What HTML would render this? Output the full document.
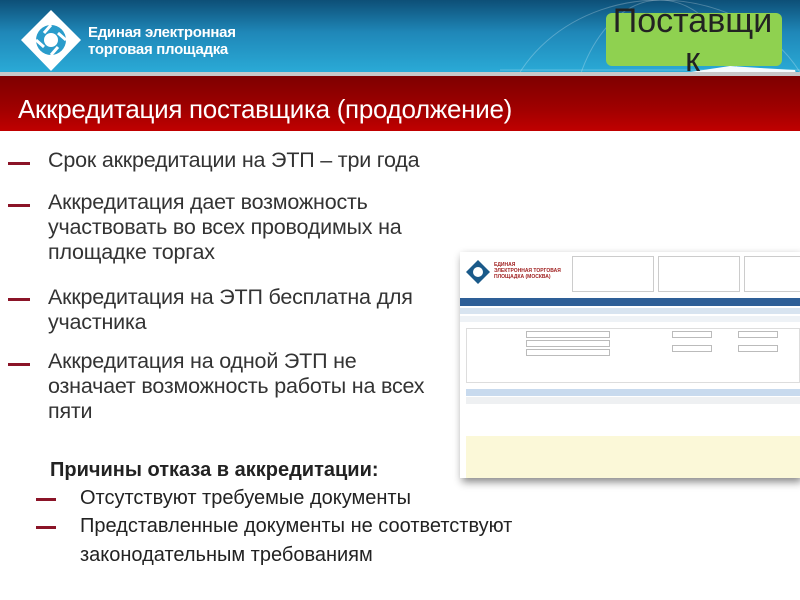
<!DOCTYPE html>
<html><head><meta charset="utf-8"><style>
*{margin:0;padding:0;box-sizing:border-box}
body{width:800px;height:600px;overflow:hidden;background:#fff;font-family:"Liberation Sans","Noto Sans CJK SC",sans-serif;position:relative}
.hdr{position:absolute;left:0;top:0;width:800px;height:72px;background:linear-gradient(#0d4f77,#1f87b8 45%,#2aaad6)}
.gl{position:absolute;left:0;top:72px;width:800px;height:4px;background:#c8c8c8}
.red{position:absolute;left:0;top:76px;width:800px;height:55px;background:linear-gradient(#7e0000,#a00000 60%,#c00000)}
.title{position:absolute;left:18px;top:94px;color:#fff;font-size:26px;letter-spacing:-0.3px}
.logo-t{position:absolute;left:88px;top:24px;color:#fff;font-size:15px;font-weight:bold;line-height:17px;letter-spacing:-0.3px}
.badge{position:absolute;left:606px;top:13px;width:176px;height:53px;background:#8fd150;border-radius:6px}
.badge-t{position:absolute;left:590px;top:2px;width:205px;text-align:center;font-size:34px;line-height:39px;color:#222}
.li{position:absolute;left:48px;font-size:21.5px;line-height:25px;color:#333;letter-spacing:-0.2px}
.d{position:absolute;left:8px;width:22px;height:3px;background:#8b1428}
.s{position:absolute;font-size:20px;line-height:28.5px;color:#222}
.shot{position:absolute;left:460px;top:252px;width:340px;height:226px;background:#fff;box-shadow:2px 4px 8px #888;overflow:hidden;font-size:5px;color:#444}
</style></head><body>
<div class="hdr"></div>
<svg style="position:absolute;left:20px;top:9px" width="62" height="63" viewBox="0 0 62 63">
<polygon points="31,1 61,31 31,62 1,31" fill="#fff"/>
<circle cx="31" cy="31" r="15" fill="#2a9ccb"/>
<circle cx="31" cy="31" r="7" fill="#fff"/>
<path d="M31 16 L24 24 M46 31 L38 24 M31 46 L38 38 M16 31 L24 38" stroke="#fff" stroke-width="3"/>
</svg>
<div class="logo-t">Единая электронная<br>торговая площадка</div>
<svg style="position:absolute;left:400px;top:0" width="400" height="140"><g stroke="#fff" stroke-opacity=".25" fill="none"><ellipse cx="260" cy="140" rx="160" ry="140"/><ellipse cx="260" cy="140" rx="90" ry="140"/><line x1="100" y1="70" x2="400" y2="70"/></g><path d="M290 72 L330 66 L360 68 L395 70 L400 88 L380 92 L350 95 L330 88 Z" fill="#fff" opacity=".95"/></svg>
<div class="gl"></div>
<div class="red"></div>
<div class="title">Аккредитация поставщика (продолжение)</div>
<div class="badge"></div>
<div class="badge-t">Поставщи<br>к</div>

<div class="d" style="top:162px"></div><div class="li" style="top:148px">Срок аккредитации на ЭТП – три года</div>
<div class="d" style="top:204px"></div><div class="li" style="top:190px">Аккредитация дает возможность<br>участвовать во всех проводимых на<br>площадке торгах</div>
<div class="d" style="top:298px"></div><div class="li" style="top:285px">Аккредитация на ЭТП бесплатна для<br>участника</div>
<div class="d" style="top:363px"></div><div class="li" style="top:349px">Аккредитация на одной ЭТП не<br>означает возможность работы на всех<br>пяти</div>

<div class="s" style="left:50px;top:456px;font-weight:bold">Причины отказа в аккредитации:</div>
<div class="d" style="left:36px;top:498px;width:20px"></div><div class="s" style="left:80px;top:484px">Отсутствуют требуемые документы</div>
<div class="d" style="left:36px;top:526px;width:20px"></div><div class="s" style="left:80px;top:512px">Представленные документы не соответствуют<br>законодательным требованиям</div>

<div class="shot">
<svg style="position:absolute;left:6px;top:8px" width="24" height="24"><polygon points="12,0 24,12 12,24 0,12" fill="#1a5a8a"/><circle cx="12" cy="12" r="5" fill="#fff"/></svg>
<div style="position:absolute;left:34px;top:10px;color:#a02020;font-weight:bold;font-size:5px;line-height:6px">ЕДИНАЯ<br>ЭЛЕКТРОННАЯ ТОРГОВАЯ<br>ПЛОЩАДКА (МОСКВА)</div>
<div style="position:absolute;left:112px;top:4px;width:82px;height:36px;border:1px solid #ccc"></div>
<div style="position:absolute;left:198px;top:4px;width:82px;height:36px;border:1px solid #ccc"></div>
<div style="position:absolute;left:284px;top:4px;width:60px;height:36px;border:1px solid #ccc"></div>
<div style="position:absolute;left:0;top:46px;width:340px;height:8px;background:#2e5f97"></div>
<div style="position:absolute;left:0;top:56px;width:340px;height:6px;background:#d8e4f0"></div>
<div style="position:absolute;left:0;top:64px;width:340px;height:6px;background:#eef2f6"></div>
<div style="position:absolute;left:6px;top:76px;width:334px;height:55px;border:1px solid #ddd"></div>
<div style="position:absolute;left:66px;top:79px;width:84px;height:7px;border:1px solid #bbb"></div>
<div style="position:absolute;left:66px;top:88px;width:84px;height:7px;border:1px solid #bbb"></div>
<div style="position:absolute;left:66px;top:97px;width:84px;height:7px;border:1px solid #bbb"></div>
<div style="position:absolute;left:212px;top:79px;width:40px;height:7px;border:1px solid #bbb"></div>
<div style="position:absolute;left:212px;top:93px;width:40px;height:7px;border:1px solid #bbb"></div>
<div style="position:absolute;left:278px;top:79px;width:40px;height:7px;border:1px solid #bbb"></div>
<div style="position:absolute;left:278px;top:93px;width:40px;height:7px;border:1px solid #bbb"></div>
<div style="position:absolute;left:6px;top:137px;width:334px;height:7px;background:#c8daee"></div>
<div style="position:absolute;left:6px;top:145px;width:334px;height:7px;background:#eef0f2"></div>
<div style="position:absolute;left:6px;top:184px;width:334px;height:46px;background:#fbf8d8"></div>
</div>
</body></html>
